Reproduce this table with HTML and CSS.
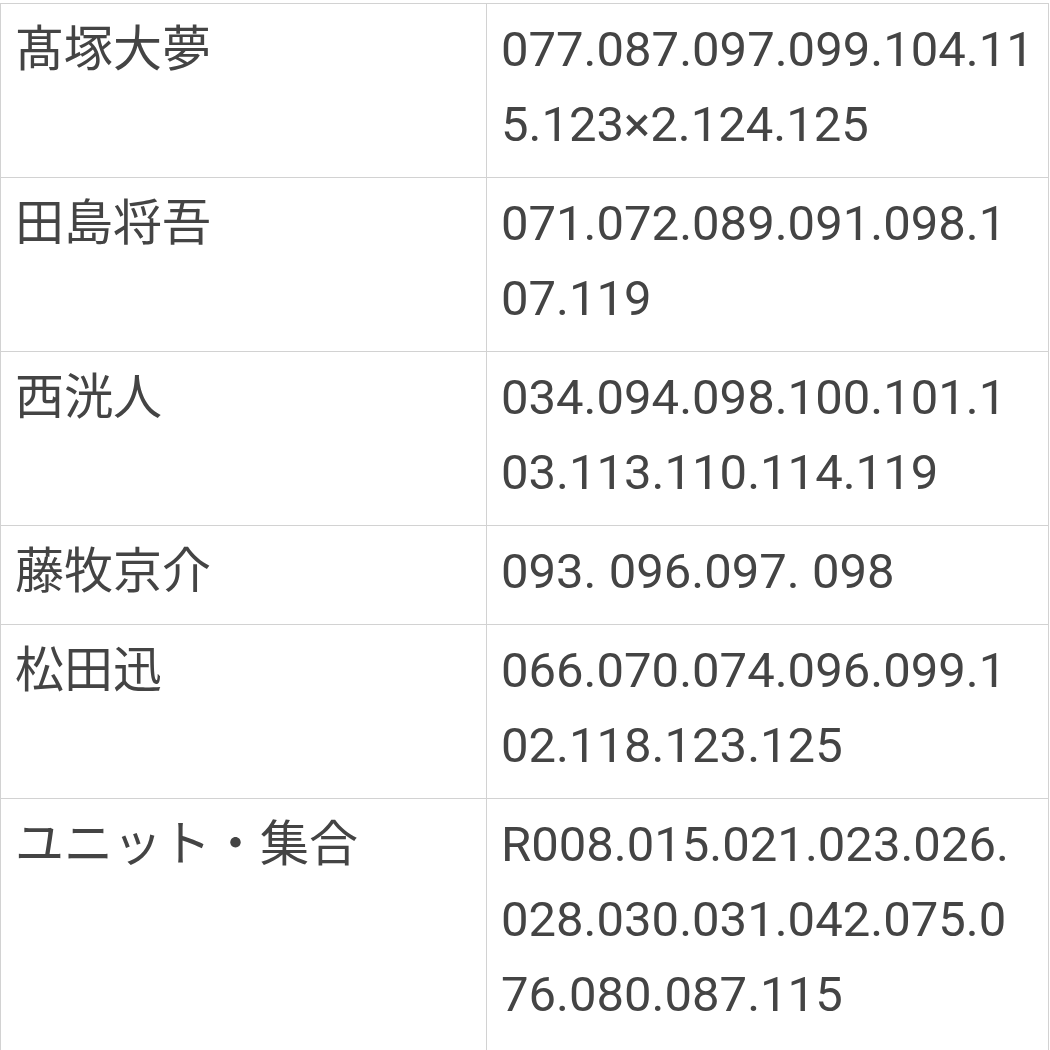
FILE: index.html
```html
<!DOCTYPE html>
<html lang="ja">
<head>
<meta charset="utf-8">
<title>番号一覧</title>
<link rel="stylesheet" href="styles.css">
</head>
<body>
<table class="list">
  <tr>
    <td class="name">髙塚大夢</td>
    <td class="nums">077.087.097.099.104.11<br>5.123×2.124.125</td>
  </tr>
  <tr>
    <td class="name">田島将吾</td>
    <td class="nums">071.072.089.091.098.1<br>07.119</td>
  </tr>
  <tr>
    <td class="name">西洸人</td>
    <td class="nums">034.094.098.100.101.1<br>03.113.110.114.119</td>
  </tr>
  <tr>
    <td class="name">藤牧京介</td>
    <td class="nums">093. 096.097. 098</td>
  </tr>
  <tr>
    <td class="name">松田迅</td>
    <td class="nums">066.070.074.096.099.1<br>02.118.123.125</td>
  </tr>
  <tr class="last">
    <td class="name">ユニット・集合</td>
    <td class="nums">R008.015.021.023.026.<br>028.030.031.042.075.0<br>76.080.087.115</td>
  </tr>
</table>
</body>
</html>
```

FILE: styles.css
```css
html, body {
  margin: 0;
  padding: 0;
  background: #ffffff;
}
body {
  padding-top: 3px;
  font-family: Roboto, "Noto Sans CJK JP", sans-serif;
  color: #444444;
}
.list {
  border-collapse: collapse;
  table-layout: fixed;
  width: 1049px;
}
.list td {
  border: 1px solid #d2d2d2;
  vertical-align: top;
  font-size: 49px;
  line-height: 75px;
  padding: 8px 15px 15px 14px;
  white-space: nowrap;
}
.list td.name {
  width: 456px;
}
.list .last td {
  padding-bottom: 18px;
}
```
